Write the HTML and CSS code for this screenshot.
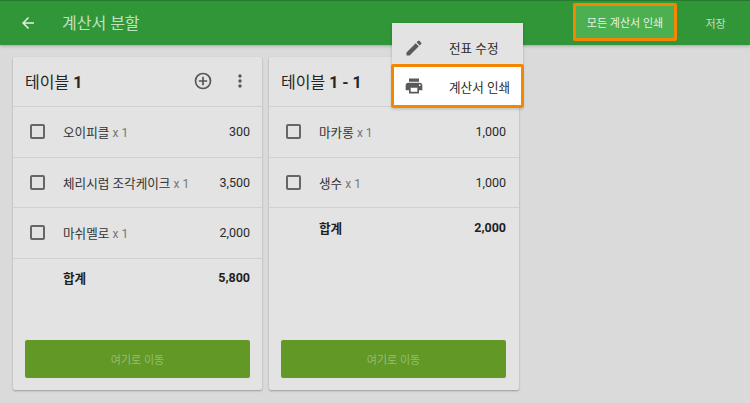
FILE: index.html
```html
<!DOCTYPE html>
<html lang="ko">
<head>
<meta charset="utf-8">
<title>계산서 분할</title>
<link rel="stylesheet" href="styles.css">
</head>
<body>
<header class="appbar">
  <svg class="back" viewBox="0 0 24 24" width="18" height="18"><path d="M20 11H7.8l5.6-5.6L12 4l-8 8 8 8 1.4-1.4L7.8 13H20z"/></svg>
  <h1 class="title">계산서 분할</h1>
  <button class="print-all">모든 계산서 인쇄</button>
  <button class="save">저장</button>
</header>
<main class="board">
  <section class="card">
    <div class="card-head">
      <h2 class="card-title">테이블 <b>1</b></h2>
      <svg class="add" viewBox="0 0 24 24" width="20" height="20"><path d="M13 7h-2v4H7v2h4v4h2v-4h4v-2h-4zM12 2a10 10 0 1 0 0 20 10 10 0 0 0 0-20zm0 18a8 8 0 1 1 0-16 8 8 0 0 1 0 16z"/></svg>
      <svg class="more" viewBox="0 0 24 24" width="20" height="20"><path d="M12 8a2 2 0 1 0 0-4 2 2 0 0 0 0 4zm0 2a2 2 0 1 0 0 4 2 2 0 0 0 0-4zm0 6a2 2 0 1 0 0 4 2 2 0 0 0 0-4z"/></svg>
    </div>
    <div class="row"><span class="check"></span><span class="name">오이피클 <small>x 1</small></span><span class="price">300</span></div>
    <div class="row"><span class="check"></span><span class="name">체리시럽 조각케이크 <small>x 1</small></span><span class="price">3,500</span></div>
    <div class="row"><span class="check"></span><span class="name">마쉬멜로 <small>x 1</small></span><span class="price">2,000</span></div>
    <div class="total"><span class="name">합계</span><span class="price">5,800</span></div>
    <button class="move">여기로 이동</button>
  </section>
  <section class="card card-wide">
    <div class="card-head">
      <h2 class="card-title">테이블 <b>1 - 1</b></h2>
    </div>
    <div class="row"><span class="check"></span><span class="name">마카롱 <small>x 1</small></span><span class="price">1,000</span></div>
    <div class="row"><span class="check"></span><span class="name">생수 <small>x 1</small></span><span class="price">1,000</span></div>
    <div class="total"><span class="name">합계</span><span class="price">2,000</span></div>
    <button class="move">여기로 이동</button>
  </section>
</main>
<div class="menu">
  <div class="menu-item">
    <svg viewBox="0 0 24 24" width="20" height="20"><path d="M3 17.25V21h3.75L17.81 9.94l-3.75-3.75L3 17.25zM20.71 7.04a1 1 0 0 0 0-1.41l-2.34-2.34a1 1 0 0 0-1.41 0l-1.83 1.83 3.75 3.75 1.83-1.83z"/></svg>
    <span>전표 수정</span>
  </div>
  <div class="menu-item selected">
    <svg viewBox="0 0 24 24" width="20" height="20"><path d="M19 8H5c-1.66 0-3 1.34-3 3v6h4v4h12v-4h4v-6c0-1.66-1.34-3-3-3zm-3 11H8v-5h8v5zm3-7a1 1 0 1 1 0-2 1 1 0 0 1 0 2zm-1-9H6v4h12V3z"/></svg>
    <span>계산서 인쇄</span>
  </div>
</div>
</body>
</html>
```
FILE: styles.css
```css
* { box-sizing: border-box; }
html, body { margin: 0; height: 100%; }
body {
  position: relative;
  width: 750px;
  height: 403px;
  overflow: hidden;
  background: #dadada;
  font-family: Roboto, "Noto Sans CJK KR", sans-serif;
  color: #2b2b2b;
}
button { font-family: inherit; border: 0; padding: 0; }
.appbar {
  height: 45px;
  display: flex;
  align-items: center;
  background: #319638;
  border-top: 1px solid #247a2c;
  box-shadow: 0 1px 3px rgba(0,0,0,.25);
  padding-left: 19px;
}
.back { fill: #e6f1e6; flex: none; }
.title {
  margin: -2px 0 0 25px;
  flex: 1;
  font-size: 16px;
  font-weight: 400;
  color: #c3e0c5;
}
.print-all {
  width: 104px;
  height: 38px;
  margin-top: -2px;
  background: #4caf50;
  border: 3px solid #f58700;
  border-radius: 2px;
  color: #e4f2e4;
  font-size: 11px;
}
.save {
  width: 73px;
  height: 37px;
  padding-left: 4px;
  background: transparent;
  color: #c3e0c5;
  font-size: 11px;
}
.board {
  display: flex;
  gap: 7px;
  padding: 12px 0 0 13px;
}
.card {
  position: relative;
  width: 249px;
  height: 333px;
  background: #e3e3e3;
  border-radius: 2px;
  box-shadow: 0 1px 2px rgba(0,0,0,.3);
  display: flex;
  flex-direction: column;
}
.card-wide { width: 250px; }
.card-head {
  height: 50px;
  flex: none;
  display: flex;
  align-items: center;
  padding: 0 12px 1px;
  border-bottom: 1px solid #d0d0d0;
}
.card-title {
  margin: 0;
  flex: 1;
  font-size: 16px;
  font-weight: 400;
  color: #262626;
}
.card-title b { font-weight: 700; }
.add { fill: #555; margin-right: 17px; }
.more { fill: #555; }
.row {
  height: 50.5px;
  flex: none;
  display: flex;
  align-items: center;
  padding: 0 12px 0 17px;
  border-bottom: 1px solid #d0d0d0;
  font-size: 12.6px;
}
.check {
  width: 15px;
  height: 15px;
  flex: none;
  border: 2px solid #666;
  border-radius: 2px;
  margin-right: 18px;
}
.name { flex: 1; color: #333; }
.name small { font-size: 12px; color: #777; }
.price { color: #2b2b2b; font-size: 12.5px; }
.total {
  height: 38px;
  flex: none;
  display: flex;
  align-items: center;
  padding: 0 12px 0 50px;
  font-size: 12.6px;
  font-weight: 700;
}
.total .name, .total .price { color: #1f1f1f; font-weight: 700; }
.card-wide .row, .card-wide .total { padding-right: 13px; }
.move {
  margin: auto 12px 12px;
  height: 38px;
  flex: none;
  background: #629826;
  border-radius: 2px;
  color: #97bd70;
  font-size: 11px;
}
.card-wide .move { margin-right: 13px; }
.menu {
  position: absolute;
  left: 392px;
  top: 23px;
  width: 131px;
  background: #e3e3e3;
  box-shadow: 0 1px 3px rgba(0,0,0,.2);
}
.menu-item {
  height: 41px;
  display: flex;
  align-items: center;
  padding: 8px 0 0 12px;
  font-size: 12.6px;
  color: #2b2b2b;
}
.menu-item svg { fill: #5a5a5a; margin-right: 25px; flex: none; }
.menu-item.selected {
  height: 44px;
  margin: 0 -1px;
  padding: 0 0 0 10px;
  background: #fff;
  border: 3px solid #f58700;
  border-radius: 2px;
}
```
